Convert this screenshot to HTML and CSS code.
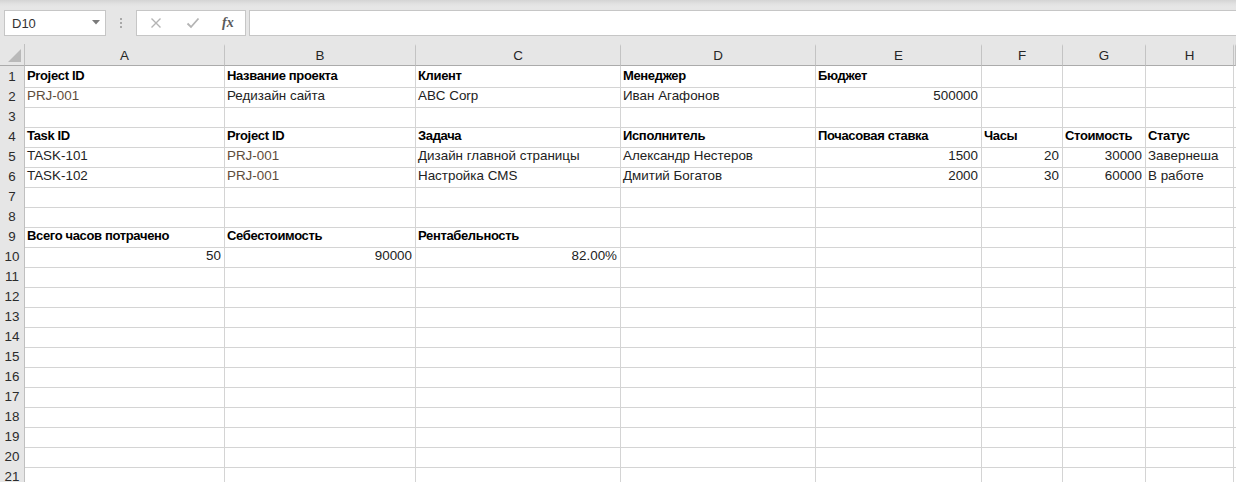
FILE: index.html
```html
<!DOCTYPE html>
<html lang="ru">
<head>
<meta charset="utf-8">
<title>Sheet</title>
<link rel="stylesheet" href="styles.css">
</head>
<body>
<div class="app">
  <div class="toolbar">
    <div class="namebox">
      <span class="nb-text">D10</span>
      <svg class="nb-arrow" width="8" height="5" viewBox="0 0 8 5"><polygon points="0,0 8,0 4,4.5" fill="#7a7a7a"/></svg>
    </div>
    <div class="grip"><span></span><span></span><span></span></div>
    <div class="fbtns">
      <svg class="fb-icon" width="12" height="12" viewBox="0 0 12 12"><path d="M1.5 1.5 L10.5 10.5 M10.5 1.5 L1.5 10.5" stroke="#b4b4b4" stroke-width="1.4" fill="none"/></svg>
      <svg class="fb-icon" width="14" height="12" viewBox="0 0 14 12"><path d="M1.5 6.5 L5 10 L12.5 1.5" stroke="#b4b4b4" stroke-width="1.8" fill="none"/></svg>
      <span class="fx">fx</span>
    </div>
    <div class="finput"></div>
  </div>

  <div class="sheet">
    <div class="row hdr">
      <div class="corner"><svg width="13" height="13" viewBox="0 0 13 13"><polygon points="13,0 13,13 0,13" fill="#b9b9b9"/></svg></div>
      <div class="ch">A</div><div class="ch">B</div><div class="ch">C</div><div class="ch">D</div><div class="ch">E</div><div class="ch">F</div><div class="ch">G</div><div class="ch">H</div><div class="ch"></div>
    </div>

    <div class="row"><div class="rh">1</div><div class="c b">Project ID</div><div class="c b">Название проекта</div><div class="c b">Клиент</div><div class="c b">Менеджер</div><div class="c b">Бюджет</div><div class="c"></div><div class="c"></div><div class="c"></div><div class="c"></div></div>
    <div class="row"><div class="rh">2</div><div class="c id">PRJ-001</div><div class="c">Редизайн сайта</div><div class="c">ABC Corp</div><div class="c">Иван Агафонов</div><div class="c r">500000</div><div class="c"></div><div class="c"></div><div class="c"></div><div class="c"></div></div>
    <div class="row"><div class="rh">3</div><div class="c"></div><div class="c"></div><div class="c"></div><div class="c"></div><div class="c"></div><div class="c"></div><div class="c"></div><div class="c"></div><div class="c"></div></div>
    <div class="row"><div class="rh">4</div><div class="c b">Task ID</div><div class="c b">Project ID</div><div class="c b">Задача</div><div class="c b">Исполнитель</div><div class="c b">Почасовая ставка</div><div class="c b">Часы</div><div class="c b">Стоимость</div><div class="c b">Статус</div><div class="c"></div></div>
    <div class="row"><div class="rh">5</div><div class="c">TASK-101</div><div class="c id">PRJ-001</div><div class="c">Дизайн главной страницы</div><div class="c">Александр Нестеров</div><div class="c r">1500</div><div class="c r">20</div><div class="c r">30000</div><div class="c">Завернеша</div><div class="c"></div></div>
    <div class="row"><div class="rh">6</div><div class="c">TASK-102</div><div class="c id">PRJ-001</div><div class="c">Настройка CMS</div><div class="c">Дмитий Богатов</div><div class="c r">2000</div><div class="c r">30</div><div class="c r">60000</div><div class="c">В работе</div><div class="c"></div></div>
    <div class="row"><div class="rh">7</div><div class="c"></div><div class="c"></div><div class="c"></div><div class="c"></div><div class="c"></div><div class="c"></div><div class="c"></div><div class="c"></div><div class="c"></div></div>
    <div class="row"><div class="rh">8</div><div class="c"></div><div class="c"></div><div class="c"></div><div class="c"></div><div class="c"></div><div class="c"></div><div class="c"></div><div class="c"></div><div class="c"></div></div>
    <div class="row"><div class="rh">9</div><div class="c b">Всего часов потрачено</div><div class="c b">Себестоимость</div><div class="c b">Рентабельность</div><div class="c"></div><div class="c"></div><div class="c"></div><div class="c"></div><div class="c"></div><div class="c"></div></div>
    <div class="row"><div class="rh">10</div><div class="c r">50</div><div class="c r">90000</div><div class="c r">82.00%</div><div class="c"></div><div class="c"></div><div class="c"></div><div class="c"></div><div class="c"></div><div class="c"></div></div>
    <div class="row"><div class="rh">11</div><div class="c"></div><div class="c"></div><div class="c"></div><div class="c"></div><div class="c"></div><div class="c"></div><div class="c"></div><div class="c"></div><div class="c"></div></div>
    <div class="row"><div class="rh">12</div><div class="c"></div><div class="c"></div><div class="c"></div><div class="c"></div><div class="c"></div><div class="c"></div><div class="c"></div><div class="c"></div><div class="c"></div></div>
    <div class="row"><div class="rh">13</div><div class="c"></div><div class="c"></div><div class="c"></div><div class="c"></div><div class="c"></div><div class="c"></div><div class="c"></div><div class="c"></div><div class="c"></div></div>
    <div class="row"><div class="rh">14</div><div class="c"></div><div class="c"></div><div class="c"></div><div class="c"></div><div class="c"></div><div class="c"></div><div class="c"></div><div class="c"></div><div class="c"></div></div>
    <div class="row"><div class="rh">15</div><div class="c"></div><div class="c"></div><div class="c"></div><div class="c"></div><div class="c"></div><div class="c"></div><div class="c"></div><div class="c"></div><div class="c"></div></div>
    <div class="row"><div class="rh">16</div><div class="c"></div><div class="c"></div><div class="c"></div><div class="c"></div><div class="c"></div><div class="c"></div><div class="c"></div><div class="c"></div><div class="c"></div></div>
    <div class="row"><div class="rh">17</div><div class="c"></div><div class="c"></div><div class="c"></div><div class="c"></div><div class="c"></div><div class="c"></div><div class="c"></div><div class="c"></div><div class="c"></div></div>
    <div class="row"><div class="rh">18</div><div class="c"></div><div class="c"></div><div class="c"></div><div class="c"></div><div class="c"></div><div class="c"></div><div class="c"></div><div class="c"></div><div class="c"></div></div>
    <div class="row"><div class="rh">19</div><div class="c"></div><div class="c"></div><div class="c"></div><div class="c"></div><div class="c"></div><div class="c"></div><div class="c"></div><div class="c"></div><div class="c"></div></div>
    <div class="row"><div class="rh">20</div><div class="c"></div><div class="c"></div><div class="c"></div><div class="c"></div><div class="c"></div><div class="c"></div><div class="c"></div><div class="c"></div><div class="c"></div></div>
    <div class="row"><div class="rh">21</div><div class="c"></div><div class="c"></div><div class="c"></div><div class="c"></div><div class="c"></div><div class="c"></div><div class="c"></div><div class="c"></div><div class="c"></div></div>
  </div>
</div>
</body>
</html>
```

FILE: styles.css
```css
* { box-sizing: border-box; }
html, body { margin: 0; padding: 0; }
body {
  width: 1236px;
  height: 482px;
  overflow: hidden;
  background: #e6e6e6;
  font-family: "Liberation Sans", Arial, sans-serif;
  font-size: 13px;
  color: #222;
}
.app { width: 1236px; height: 482px; overflow: hidden; }

.toolbar {
  height: 44px;
  display: flex;
  align-items: flex-start;
  padding-top: 10px;
  padding-left: 4px;
  background: linear-gradient(to bottom, #d4d4d4 0px, #e2e2e2 4px, #e6e6e6 7px, #e6e6e6 100%);
}
.namebox {
  width: 102px;
  height: 26px;
  background: #fff;
  border: 1px solid #c6c6c6;
  display: flex;
  align-items: center;
  justify-content: space-between;
  padding: 0 5px 0 7px;
}
.nb-text { font-size: 13px; color: #333; }
.nb-arrow { display: block; margin-top: -2px; }
.grip {
  width: 30px;
  height: 26px;
  display: flex;
  flex-direction: column;
  align-items: center;
  justify-content: center;
  gap: 2px;
}
.grip span { width: 2px; height: 2px; background: #a8a8a8; display: block; }
.fbtns {
  width: 110px;
  height: 26px;
  background: #fff;
  border: 1px solid #c6c6c6;
  display: flex;
  align-items: center;
  padding-left: 13px;
  gap: 24px;
}
.fb-icon { display: block; }
.fx {
  font-family: "Liberation Serif", "Times New Roman", serif;
  font-style: italic;
  font-weight: bold;
  font-size: 14px;
  color: #5a5a5a;
  margin-left: -2px;
}
.finput {
  flex: 1;
  margin-left: 3px;
  height: 26px;
  background: #fff;
  border: 1px solid #c6c6c6;
  border-right: none;
}

.sheet { background: #fff; }
.row {
  display: grid;
  grid-template-columns: 25px 200px 191px 205px 195px 166px 81px 83px 88px 1fr;
  height: 20px;
}
.row.hdr { height: 22px; background: #e6e6e6; }
.corner {
  border-right: 1px solid #c0c0c0;
  border-bottom: 1px solid #ababab;
  display: flex;
  align-items: flex-end;
  justify-content: flex-end;
  padding: 0 3px 3px 0;
}
.corner svg { display: block; }
.ch {
  background: #e6e6e6;
  border-bottom: 1px solid #ababab;
  border-right: 1px solid #c3c3c3;
  border-top: 2px solid #e6e6e6;
  text-align: center;
  line-height: 19px;
  font-size: 13.4px;
  color: #262626;
}
.rh {
  background: #e6e6e6;
  border-right: 1px solid #c0c0c0;
  border-bottom: 1px solid #d0d0d0;
  text-align: center;
  line-height: 20px;
  padding-top: 1px;
  font-size: 13.4px;
  color: #2b2b2b;
}
.c {
  border-right: 1px solid #d4d4d4;
  border-bottom: 1px solid #d4d4d4;
  padding: 1px 3px 0 2px;
  line-height: 18px;
  white-space: nowrap;
  overflow: hidden;
  font-size: 13.4px;
  color: #222;
}
.c.b { font-weight: bold; color: #000; font-size: 13px; letter-spacing: -0.35px; }
.c.r { text-align: right; }
.c.id { color: #5e4c3a; }
```
